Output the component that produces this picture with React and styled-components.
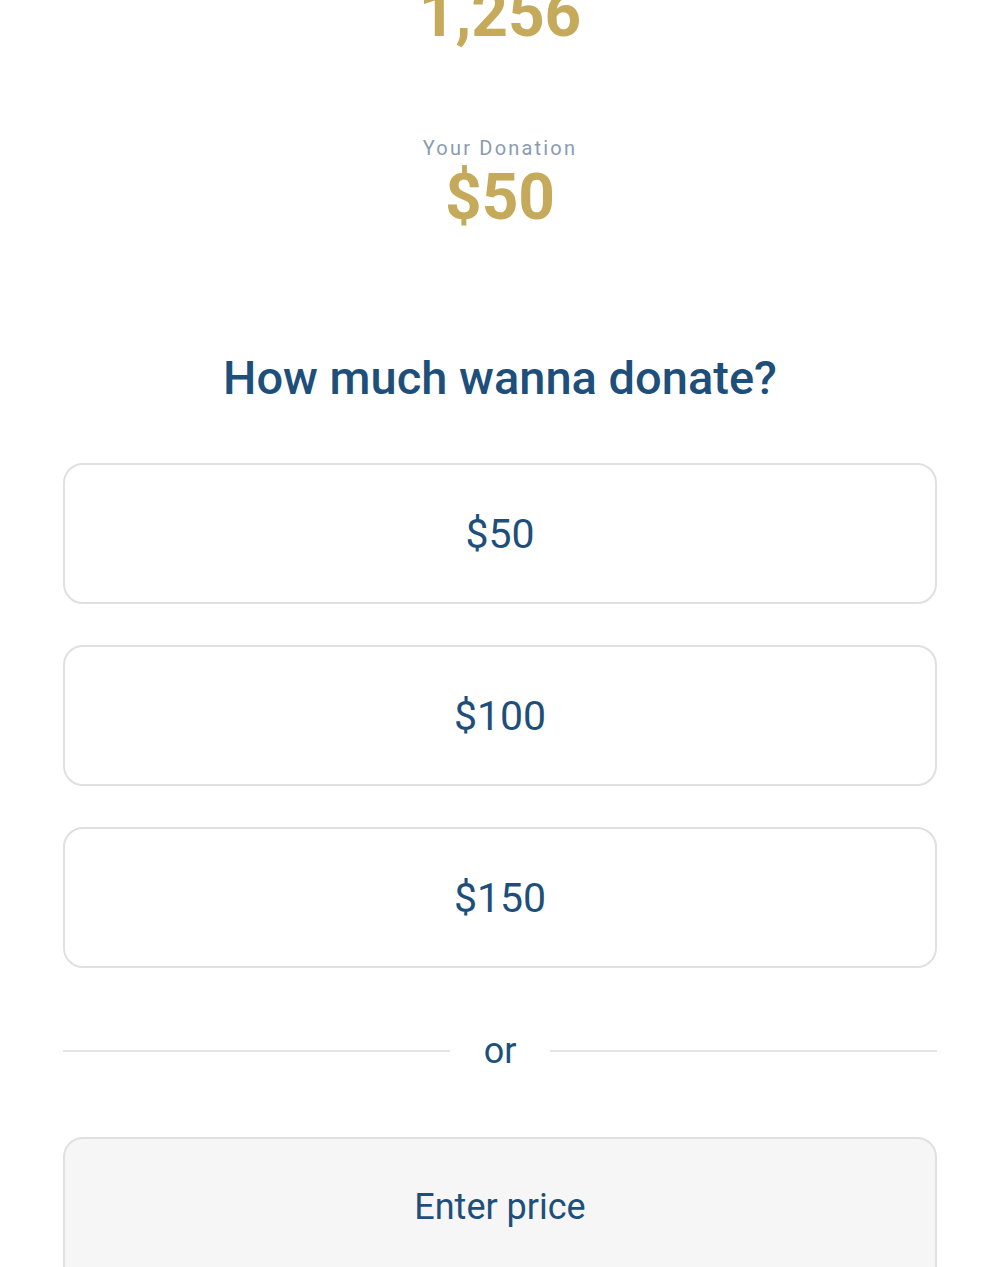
import React from "react";
import styled, { createGlobalStyle } from "styled-components";

const GlobalStyle = createGlobalStyle`
  html, body {
    margin: 0;
    padding: 0;
    background: #ffffff;
  }
  body {
    font-family: Roboto, "Liberation Sans", Arial, sans-serif;
    overflow: hidden;
  }
`;

const Page = styled.div`
  width: 1000px;
  height: 1267px;
  overflow: hidden;
  box-sizing: border-box;
  padding: 0 63px;
  display: flex;
  flex-direction: column;
  align-items: stretch;
`;

const Stat = styled.div`
  margin-top: ${(p) => p.$top}px;
  text-align: center;
  font-size: 64px;
  font-weight: 700;
  line-height: 1;
  color: #c6aa5c;
`;

const Label = styled.div`
  margin-top: 91px;
  text-align: center;
  font-size: 20px;
  line-height: 1;
  letter-spacing: 2.2px;
  color: #8a9bb0;
`;

const Heading = styled.h2`
  margin: 124px 0 0;
  text-align: center;
  font-size: 47px;
  font-weight: 500;
  line-height: 1;
  color: #1e4f7b;
`;

const Options = styled.div`
  margin-top: 62px;
  display: flex;
  flex-direction: column;
  gap: 41px;
`;

const Option = styled.button`
  height: 141px;
  border: 2px solid #e0e0e0;
  border-radius: 20px;
  background: #ffffff;
  font-family: inherit;
  font-size: 41px;
  color: #1e4f7b;
  cursor: pointer;
`;

const Divider = styled.div`
  margin-top: 63px;
  height: 40px;
  display: flex;
  align-items: center;
  gap: 34px;
  font-size: 36px;
  color: #1e4f7b;

  &::before,
  &::after {
    content: "";
    flex: 1;
    height: 2px;
    background: #e4e4e4;
  }
`;

const PriceInput = styled.input`
  margin-top: 66px;
  flex: none;
  height: 160px;
  box-sizing: border-box;
  padding: 0 0 20px;
  border: 2px solid #e0e0e0;
  border-radius: 20px;
  background: #f6f6f6;
  font-family: inherit;
  font-size: 36px;
  text-align: center;
  color: #1e4f7b;
  outline: none;

  &::placeholder {
    color: #1e4f7b;
    opacity: 1;
  }
`;

const amounts = ["$50", "$100", "$150"];

export default function App() {
  return (
    <>
      <GlobalStyle />
      <Page>
        <Stat $top={-17}>1,256</Stat>
        <Label>Your Donation</Label>
        <Stat $top={8}>$50</Stat>
        <Heading>How much wanna donate?</Heading>
        <Options>
          {amounts.map((a) => (
            <Option key={a}>{a}</Option>
          ))}
        </Options>
        <Divider>or</Divider>
        <PriceInput placeholder="Enter price" />
      </Page>
    </>
  );
}
